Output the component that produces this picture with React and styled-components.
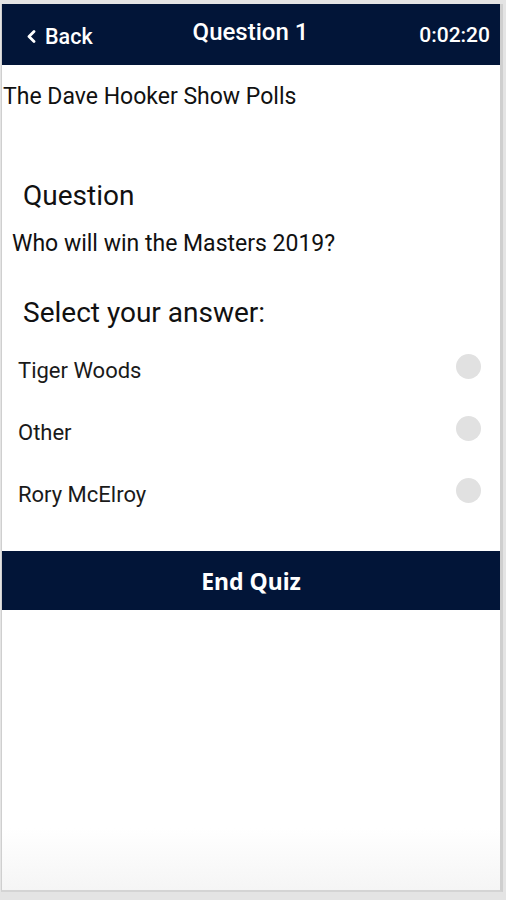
import React from "react";
import styled, { createGlobalStyle } from "styled-components";

const Global = createGlobalStyle`
  html, body { margin: 0; padding: 0; background: #e4e4e4; }
  body { font-family: Roboto, "Noto Sans", sans-serif; }
`;

const Page = styled.div`
  padding: 4px 3px 0 1px;
  height: 900px;
  box-sizing: border-box;
`;

const Frame = styled.div`
  box-sizing: border-box;
  width: 502px;
  height: 888px;
  border-left: 1px solid #cfcfcf;
  border-right: 3px solid #cfcfcf;
  border-bottom: 2px solid #d4d4d4;
  background: linear-gradient(to bottom, #ffffff 0%, #ffffff 93%, #f5f5f5 100%);
  display: flex;
  flex-direction: column;
`;

const Header = styled.div`
  height: 61px;
  background: #021538;
  color: #ffffff;
  display: grid;
  grid-template-columns: 1fr auto 1fr;
  align-items: center;
  padding: 0 10px 0 25px;
  font-weight: 500;
`;

const BackLink = styled.div`
  display: flex;
  align-items: center;
  gap: 9px;
  font-size: 21.5px;
  margin-top: 4px;
`;

const Title = styled.div`
  text-align: center;
  font-size: 24px;
  margin-top: -5px;
  padding-right: 16px;
`;

const Timer = styled.div`
  text-align: right;
  font-size: 21px;
`;

const PollName = styled.div`
  margin-top: 17px;
  padding-left: 1px;
  font-size: 23px;
  line-height: 30px;
  color: #111;
`;

const Heading = styled.div`
  margin-top: ${(p) => p.$mt}px;
  padding-left: 21px;
  font-size: 28px;
  line-height: 32px;
  color: #111;
`;

const QuestionText = styled.div`
  margin-top: 19px;
  padding-left: 10px;
  font-size: 23px;
  line-height: 26px;
  color: #111;
`;

const Options = styled.div`
  margin-top: 10px;
  display: flex;
  flex-direction: column;
`;

const OptionRow = styled.div`
  height: 62px;
  display: flex;
  align-items: center;
  justify-content: space-between;
  padding: 0 19px 0 16px;
  font-size: 22px;
  color: #1a1a1a;
`;

const Radio = styled.span`
  width: 25px;
  height: 25px;
  border-radius: 50%;
  background: #e1e1e1;
  margin-top: -8px;
`;

const EndButton = styled.button`
  margin-top: 26px;
  height: 59px;
  border: none;
  background: #021538;
  color: #fff;
  font-family: "Noto Sans", "Open Sans", sans-serif;
  font-weight: 700;
  font-size: 23px;
  width: 498px;
`;

const options = ["Tiger Woods", "Other", "Rory McElroy"];

export default function App() {
  return (
    <>
      <Global />
      <Page>
        <Frame>
          <Header>
            <BackLink>
              <svg width="9" height="13" viewBox="0 0 9 13">
                <path d="M7 1.5 L2 6.5 L7 11.5" stroke="#fff" strokeWidth="2.8" fill="none" strokeLinecap="round" strokeLinejoin="round" />
              </svg>
              <span>Back</span>
            </BackLink>
            <Title>Question 1</Title>
            <Timer>0:02:20</Timer>
          </Header>
          <PollName>The Dave Hooker Show Polls</PollName>
          <Heading $mt={68}>Question</Heading>
          <QuestionText>Who will win the Masters 2019?</QuestionText>
          <Heading $mt={40}>Select your answer:</Heading>
          <Options>
            {options.map((o) => (
              <OptionRow key={o}>
                <span>{o}</span>
                <Radio />
              </OptionRow>
            ))}
          </Options>
          <EndButton>End Quiz</EndButton>
        </Frame>
      </Page>
    </>
  );
}
